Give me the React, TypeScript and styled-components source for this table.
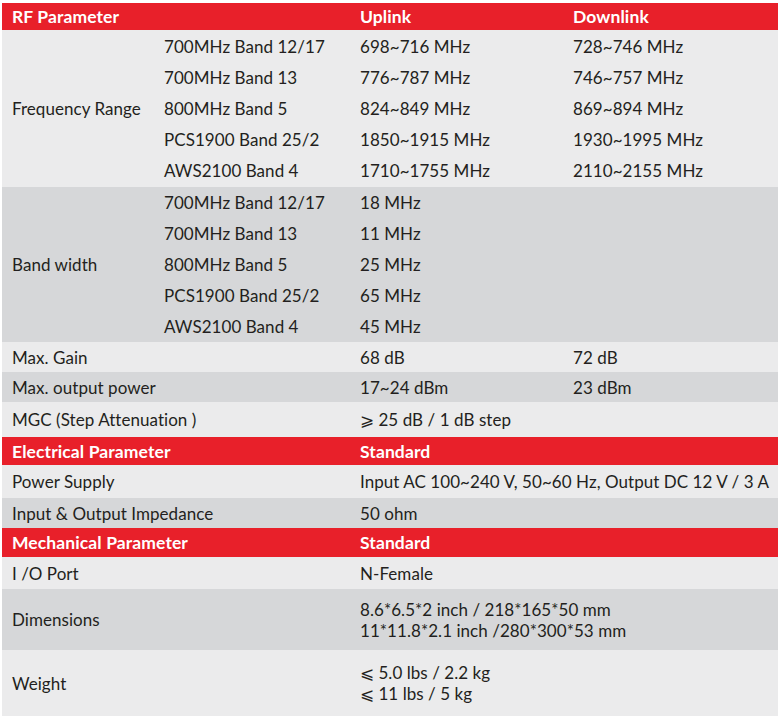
import React from "react";
import styled, { createGlobalStyle } from "styled-components";

const GlobalStyle = createGlobalStyle`
  body {
    margin: 0;
    background: #ffffff;
    font-family: "Lato", "Liberation Sans", sans-serif;
  }
`;

const LIGHT = "#ebebec";
const DARK = "#d6d7d9";

interface BandLine {
  band: string;
  up: string;
  down?: string;
}

interface SimpleRow {
  label: string;
  lines: string[];
  down?: string;
  height: number;
  shade: string;
  wide?: boolean;
}

const frequency: BandLine[] = [
  { band: "700MHz Band 12/17", up: "698~716 MHz", down: "728~746 MHz" },
  { band: "700MHz Band 13", up: "776~787 MHz", down: "746~757 MHz" },
  { band: "800MHz Band 5", up: "824~849 MHz", down: "869~894 MHz" },
  { band: "PCS1900 Band 25/2", up: "1850~1915 MHz", down: "1930~1995 MHz" },
  { band: "AWS2100 Band 4", up: "1710~1755 MHz", down: "2110~2155 MHz" },
];

const bandwidth: BandLine[] = [
  { band: "700MHz Band 12/17", up: "18 MHz" },
  { band: "700MHz Band 13", up: "11 MHz" },
  { band: "800MHz Band 5", up: "25 MHz" },
  { band: "PCS1900 Band 25/2", up: "65 MHz" },
  { band: "AWS2100 Band 4", up: "45 MHz" },
];

const rfRows: SimpleRow[] = [
  { label: "Max. Gain", lines: ["68 dB"], down: "72 dB", height: 30, shade: LIGHT },
  { label: "Max. output power", lines: ["17~24 dBm"], down: "23 dBm", height: 30, shade: DARK },
  { label: "MGC (Step Attenuation )", lines: ["\u2a7e 25 dB / 1 dB step"], height: 35, shade: LIGHT, wide: true },
];

const electricalRows: SimpleRow[] = [
  { label: "Power Supply", lines: ["Input AC 100~240 V, 50~60 Hz, Output DC 12 V / 3 A"], height: 33, shade: LIGHT, wide: true },
  { label: "Input & Output Impedance", lines: ["50 ohm"], height: 30, shade: DARK, wide: true },
];

const mechanicalRows: SimpleRow[] = [
  { label: "I /O Port", lines: ["N-Female"], height: 32, shade: LIGHT, wide: true },
  {
    label: "Dimensions",
    lines: ["8.6*6.5*2 inch / 218*165*50 mm", "11*11.8*2.1 inch /280*300*53 mm"],
    height: 61,
    shade: DARK,
    wide: true,
  },
  { label: "Weight", lines: ["\u2a7d 5.0 lbs / 2.2 kg", "\u2a7d 11 lbs / 5 kg"], height: 66, shade: LIGHT, wide: true },
];

const Section = ({ title, cols, height }: { title: string; cols: string[]; height: number }) => (
  <HeadRow style={{ height }}>
    <HeadCell $span={2}>{title}</HeadCell>
    {cols.map((c, i) => (
      <HeadCell key={i} $span={cols.length === 1 ? 2 : 1}>
        {c}
      </HeadCell>
    ))}
  </HeadRow>
);

const BandGroup = ({ label, lines, shade, pad }: { label: string; lines: BandLine[]; shade: string; pad: number }) => (
  <Row $bg={shade}>
    <Label>{label}</Label>
    <SubGrid $pad={pad}>
      {lines.map((l, i) => (
        <React.Fragment key={i}>
          <Cell>{l.band}</Cell>
          <Cell>{l.up}</Cell>
          <Cell>{l.down ?? ""}</Cell>
        </React.Fragment>
      ))}
    </SubGrid>
  </Row>
);

const Simple = ({ row }: { row: SimpleRow }) => (
  <Row $bg={row.shade} style={{ height: row.height }}>
    <Label $span={2}>{row.label}</Label>
    <Value $span={row.wide ? 2 : 1}>
      {row.lines.map((t, i) => (
        <div key={i}>{t}</div>
      ))}
    </Value>
    {!row.wide && <Value $span={1}>{row.down}</Value>}
  </Row>
);

export default function App() {
  return (
    <>
      <GlobalStyle />
      <Table>
        <Section title="RF Parameter" cols={["Uplink", "Downlink"]} height={27} />
        <BandGroup label="Frequency Range" lines={frequency} shade={LIGHT} pad={1} />
        <BandGroup label="Band width" lines={bandwidth} shade={DARK} pad={0} />
        {rfRows.map((r, i) => (
          <Simple key={i} row={r} />
        ))}
        <Section title="Electrical Parameter" cols={["Standard"]} height={28} />
        {electricalRows.map((r, i) => (
          <Simple key={i} row={r} />
        ))}
        <Section title="Mechanical Parameter" cols={["Standard"]} height={29} />
        {mechanicalRows.map((r, i) => (
          <Simple key={i} row={r} />
        ))}
      </Table>
    </>
  );
}

const COLS = "152px 196px 213px 1fr";

const Table = styled.div`
  width: 776px;
  margin: 3px 0 0 2px;
  color: #231f20;
  font-size: 17px;
  letter-spacing: 0.05px;
`;

const HeadRow = styled.div`
  display: grid;
  grid-template-columns: ${COLS};
  background: #e8202a;
  align-items: center;
`;

const HeadCell = styled.div<{ $span: number }>`
  grid-column: span ${(p) => p.$span};
  padding-left: 10px;
  color: #ffffff;
  font-weight: 700;
  font-size: 17.5px;
  letter-spacing: 0.1px;
`;

const Row = styled.div<{ $bg: string }>`
  display: grid;
  grid-template-columns: ${COLS};
  align-items: center;
  background: ${(p) => p.$bg};
`;

const Label = styled.div<{ $span?: number }>`
  grid-column: span ${(p) => p.$span ?? 1};
  padding-left: 10px;
  white-space: nowrap;
`;

const SubGrid = styled.div<{ $pad: number }>`
  grid-column: 2 / 5;
  display: grid;
  grid-template-columns: 196px 213px 1fr;
  grid-auto-rows: 31px;
  padding: ${(p) => p.$pad}px 0;
  align-items: center;
`;

const Cell = styled.div`
  padding-left: 10px;
  white-space: nowrap;
`;

const Value = styled.div<{ $span: number }>`
  grid-column: span ${(p) => p.$span};
  padding-left: 10px;
  line-height: 21px;
  white-space: nowrap;
`;
